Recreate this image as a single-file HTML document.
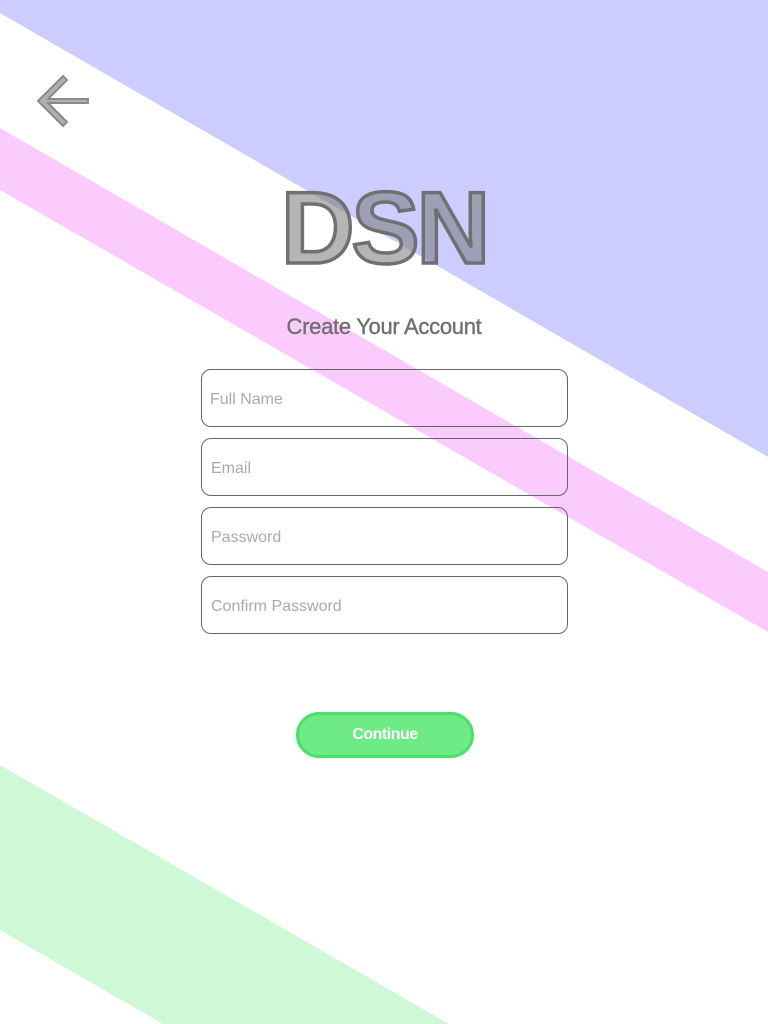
<!DOCTYPE html>
<html><head><style>
body{margin:0;width:768px;height:1024px;position:relative;overflow:hidden;background:#fff;font-family:"Liberation Sans",sans-serif}
svg.bg{position:absolute;left:0;top:0}
.logo{position:absolute;left:0;width:768px;top:168px;text-align:center;font-size:102px;font-weight:bold;letter-spacing:-3px;color:rgba(120,120,120,0.55);-webkit-text-stroke:3.5px #707070;line-height:120px}
.title{position:absolute;left:0;width:768px;top:314px;text-align:center;font-size:22px;color:#707070;letter-spacing:-0.3px;-webkit-text-stroke:0.4px #707070}
.in{position:absolute;left:201px;border:1px solid #666;border-radius:10px;color:#aaa;font-size:16px;line-height:60px;padding-left:9px;box-sizing:border-box;width:367px;height:58px}
.btn{position:absolute;left:296px;top:712px;width:178px;height:46px;box-sizing:border-box;border:3px solid #4be069;background:#6eea86;border-radius:23px;color:#fff;font-weight:bold;font-size:16px;text-align:center;line-height:40px;letter-spacing:-0.5px}
</style></head><body>
<svg class="bg" width="768" height="1024">
<polygon points="0,0 768,0 768,457 0,13" fill="#ccccff"/>
<polygon points="0,128 768,572 768,632 0,190" fill="#fccbfd"/>
<polygon points="0,765 449,1024 163,1024 0,930" fill="#cef8d6"/>
<path d="M88,99 L48,99 L67,80 L63,76 L38,101 L63,126 L67,122 L48,103 L88,103 Z" fill="#b0b0b0" stroke="#8a8a8a" stroke-width="2" stroke-linejoin="miter"/>
</svg>
<div class="logo">DSN</div>
<div class="title">Create Your Account</div>
<div class="in" style="top:369px;padding-left:8px">Full Name</div>
<div class="in" style="top:438px">Email</div>
<div class="in" style="top:507px">Password</div>
<div class="in" style="top:576px">Confirm Password</div>
<div class="btn">Continue</div>
</body></html>
